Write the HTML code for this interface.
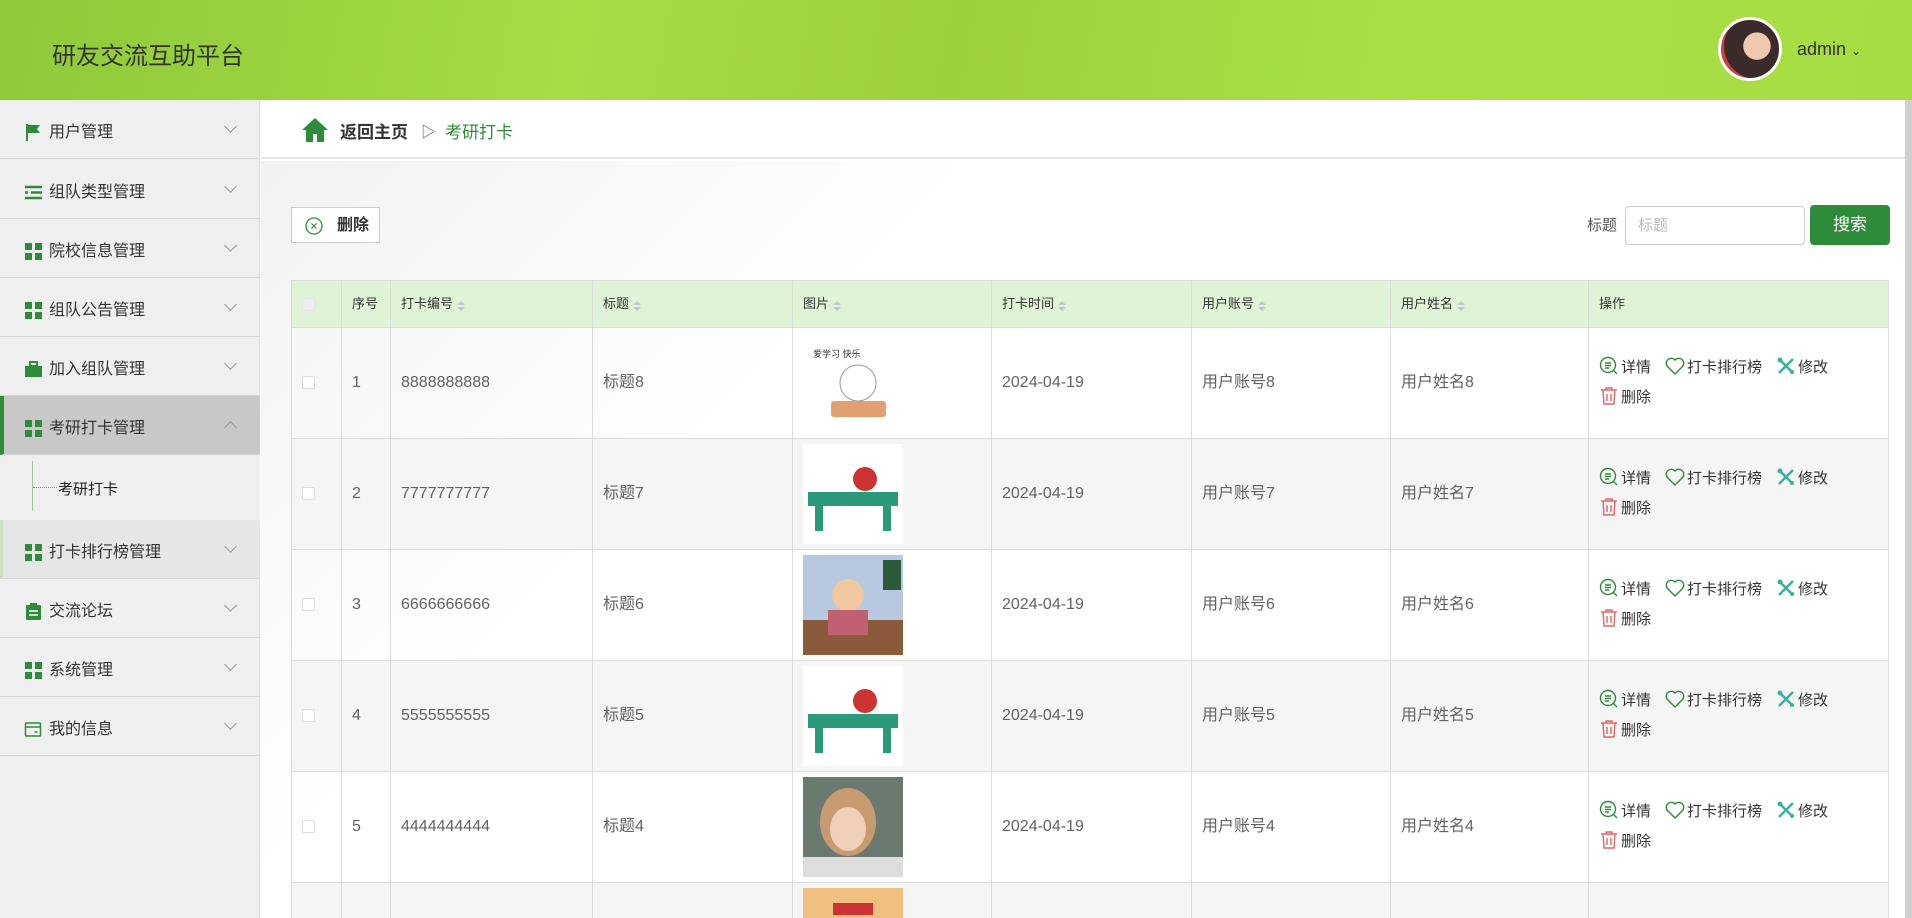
<!DOCTYPE html>
<html><head><meta charset="utf-8"><style>
*{box-sizing:border-box;margin:0;padding:0}
html,body{width:1912px;height:918px;overflow:hidden}
body{font-family:"Liberation Sans","Noto Sans CJK SC",sans-serif;background:#fff;position:relative;color:#606266}
.hdr{position:absolute;left:0;top:0;width:1912px;height:100px;background:linear-gradient(100deg,#8fc93a 0%,#a6dc44 30%,#9cd13e 50%,#a9e145 75%,#a4dc42 100%)}
.hdr .t{position:absolute;left:52px;top:36px;font-size:24px;color:#333}
.av{position:absolute;left:1718px;top:17px;width:64px;height:64px;border-radius:50%;background:radial-gradient(circle at 62% 45%,#f0c8b0 0 28%,#3a2a2a 29% 68%,#c94040 69%);border:3px solid #fff}
.adm{position:absolute;left:1797px;top:39px;font-size:18px;color:#333}
.side{position:absolute;left:0;top:100px;width:260px;height:818px;background:#efefef;border-right:1px solid #ddd}
.mi{position:absolute;left:0;width:260px;height:59px;border-bottom:1px solid #d6d6d6;font-size:16px;color:#333}
.mi .ic{position:absolute;left:25px;top:24px;width:17px;height:17px}
.mi span{position:absolute;left:49px;top:23px;line-height:20px}
.mi .ar{position:absolute;left:226px;top:22px;width:9px;height:9px;border-right:1px solid #999;border-bottom:1px solid #999;transform:rotate(45deg)}
.grid{background:linear-gradient(#2e8b3a,#2e8b3a) 0 0/7px 7px no-repeat,linear-gradient(#2e8b3a,#2e8b3a) 10px 0/7px 7px no-repeat,linear-gradient(#2e8b3a,#2e8b3a) 0 10px/7px 7px no-repeat,linear-gradient(#2e8b3a,#2e8b3a) 10px 10px/7px 7px no-repeat}
.bc{position:absolute;left:261px;top:100px;width:1644px;height:59px;background:#fff;border-bottom:2px solid #e8e8e8}
.main{position:absolute;left:261px;top:161px;width:1644px;height:757px;background:linear-gradient(135deg,#f2f2f2 0%,#fff 30%,#fff 100%)}
.scroll{position:absolute;left:1905px;top:100px;width:7px;height:818px;background:#d0d0d0}
.btn{position:absolute;left:291px;top:207px;width:89px;height:36px;border:1px solid #ccc;background:#fff;font-size:16px;font-weight:bold;color:#333}
.tw{position:absolute;left:291px;top:280px;width:1599px;height:638px;overflow:hidden}
table{width:1598px;border-collapse:collapse;font-size:16px;line-height:20px}
td,th{border:1px solid #dcdcdc;text-align:left;padding-left:10px;vertical-align:middle}
th{height:47px;background:#dff3d6;font-size:13px;font-weight:normal;color:#333}
td{height:111px}
tr.g td{background:#f5f5f5}
.s{display:inline-block;vertical-align:middle;margin-left:4px;width:0;height:0;position:relative;top:-4px;border:4px solid transparent;border-bottom-color:#c0c4cc}
.s:after{content:"";position:absolute;left:-4px;top:6px;border:4px solid transparent;border-top-color:#c0c4cc}
.cb{display:inline-block;width:13px;height:13px;border:1px solid #ddd;background:#fff;border-radius:2px;vertical-align:middle}
.img{width:100px;height:100px;display:block}
.op{font-size:15px;color:#333;line-height:30px}
.op i{font-style:normal;margin-right:14px;white-space:nowrap}
.op svg{vertical-align:-4px;margin-right:2px}
</style></head><body>
<div class="hdr"><div class="t">研友交流互助平台</div><div class="av"></div><div class="adm">admin <span style="font-size:12px">⌄</span></div></div>
<div class="side">
<div class="mi" style="top:0"><svg class="ic" viewBox="0 0 17 17"><path d="M2 0v17" stroke="#2e8b3a" stroke-width="2"/><path d="M3 1h12l-3 4 3 4H3z" fill="#2e8b3a"/></svg><span>用户管理</span><i class="ar"></i></div>
<div class="mi" style="top:60px"><svg class="ic" viewBox="0 0 17 17"><path d="M0 3h17M6 8.5h11M0 14h17M0 8.5h3" stroke="#2e8b3a" stroke-width="2.5"/></svg><span>组队类型管理</span><i class="ar"></i></div>
<div class="mi" style="top:119px"><i class="ic grid"></i><span>院校信息管理</span><i class="ar"></i></div>
<div class="mi" style="top:178px"><i class="ic grid"></i><span>组队公告管理</span><i class="ar"></i></div>
<div class="mi" style="top:237px"><svg class="ic" viewBox="0 0 17 17"><rect x="0" y="5" width="17" height="11" fill="#2e8b3a"/><rect x="5" y="1" width="7" height="4" fill="none" stroke="#2e8b3a" stroke-width="2"/></svg><span>加入组队管理</span><i class="ar"></i></div>
<div class="mi" style="top:296px;background:#c8c8c8;border-left:4px solid #2e8b3a"><i class="ic grid" style="left:21px"></i><span style="left:45px">考研打卡管理</span><i class="ar" style="transform:rotate(225deg);top:27px;left:222px"></i></div>
<div style="position:absolute;top:355px;left:0;width:260px;height:65px;background:#efefef"><div style="position:absolute;left:32px;top:6px;width:1px;height:50px;background:#9c9"></div><div style="position:absolute;left:33px;top:32px;width:24px;border-top:1px dotted #888"></div><span style="position:absolute;left:58px;top:23px;font-size:15px;color:#222">考研打卡</span></div>
<div class="mi" style="top:420px;background:#e6e6e6;border-left:3px solid #cde0c5"><i class="ic grid" style="left:22px"></i><span style="left:46px">打卡排行榜管理</span><i class="ar" style="left:223px"></i></div>
<div class="mi" style="top:479px"><svg class="ic" viewBox="0 0 17 17"><rect x="1" y="2" width="15" height="15" rx="1" fill="#2e8b3a"/><rect x="5" y="0" width="7" height="4" fill="#2e8b3a"/><path d="M4 8h9M4 12h9" stroke="#fff" stroke-width="1.5"/></svg><span>交流论坛</span><i class="ar"></i></div>
<div class="mi" style="top:538px"><i class="ic grid"></i><span>系统管理</span><i class="ar"></i></div>
<div class="mi" style="top:597px"><svg class="ic" viewBox="0 0 17 17" style="left:23px;width:20px"><rect x="1" y="2" width="15" height="13" rx="1" fill="none" stroke="#2e8b3a" stroke-width="1.5"/><path d="M1 6h15M10 11h3" stroke="#2e8b3a" stroke-width="1.5"/></svg><span>我的信息</span><i class="ar"></i></div>
</div>
<div class="main"></div>
<div class="bc"><svg style="position:absolute;left:40px;top:17px" width="28" height="26" viewBox="0 0 28 26"><path d="M14 1L1 13h4v12h7v-8h4v8h7V13h4z" fill="#2e8b3a"/></svg><span style="position:absolute;left:79px;top:23px;font-size:17px;line-height:20px;font-weight:bold;color:#333">返回主页</span><span style="position:absolute;left:160px;top:23px;font-size:15px;line-height:20px;color:#555">▷</span><span style="position:absolute;left:184px;top:23px;font-size:17px;line-height:20px;color:#2e8b3a">考研打卡</span></div>
<div class="scroll"></div>
<div class="btn"><svg style="position:absolute;left:13px;top:9px" width="18" height="18" viewBox="0 0 18 18"><circle cx="9" cy="9" r="8" fill="none" stroke="#2e8b3a" stroke-width="1.3"/><path d="M6.5 6.5l5 5M11.5 6.5l-5 5" stroke="#2e8b3a" stroke-width="1.2"/></svg><span style="position:absolute;left:45px;top:8px;line-height:20px">删除</span></div>
<span style="position:absolute;left:1587px;top:216px;font-size:15px;line-height:20px;color:#555">标题</span>
<div style="position:absolute;left:1625px;top:206px;width:180px;height:39px;border:1px solid #ccc;border-radius:4px;background:#fff"><span style="position:absolute;left:12px;top:9px;font-size:15px;line-height:20px;color:#bbb">标题</span></div>
<div style="position:absolute;left:1810px;top:205px;width:80px;height:40px;border-radius:4px;background:#2e8b3a;color:#fff;font-size:17px;text-align:center;line-height:40px">搜索</div>
<svg width="0" height="0" style="position:absolute;left:0;top:0"><defs>
<symbol id="d" viewBox="0 0 20 20"><circle cx="9" cy="9" r="7.5" fill="none" stroke="#2e8b3a" stroke-width="1.4"/><path d="M6 7h6M6 9.5h6M6 12h4M14 14l4 4" stroke="#2e8b3a" stroke-width="1.4"/></symbol>
<symbol id="h" viewBox="0 0 20 20"><path d="M10 18L2.5 10.5A4.5 4.5 0 0 1 10 4a4.5 4.5 0 0 1 7.5 6.5z" fill="none" stroke="#2e8b3a" stroke-width="1.4"/></symbol>
<symbol id="w" viewBox="0 0 20 20"><path d="M3 3l14 14M17 3L3 17" stroke="#3ab09e" stroke-width="2.5"/><circle cx="4" cy="4" r="2.5" fill="#3ab09e"/><circle cx="16" cy="16" r="2" fill="#3ab09e"/></symbol>
<symbol id="t" viewBox="0 0 20 20"><path d="M2 4h16M7 4V2h6v2M4 4l1 14h10l1-14M8 8v7M12 8v7" fill="none" stroke="#d66" stroke-width="1.4"/></symbol>
</defs></svg>
<div class="tw"><table>
<tr><th style="width:50px"><span class="cb" style="background:#eee;border-color:#e5e5e5"></span></th><th style="width:49px">序号</th><th style="width:202px">打卡编号<i class="s"></i></th><th style="width:200px">标题<i class="s"></i></th><th style="width:199px">图片<i class="s"></i></th><th style="width:200px">打卡时间<i class="s"></i></th><th style="width:199px">用户账号<i class="s"></i></th><th style="width:198px">用户姓名<i class="s"></i></th><th>操作</th></tr>
<tr><td><span class="cb"></span></td><td>1</td><td>8888888888</td><td>标题8</td><td><svg class="img" viewBox="0 0 100 100"><rect width="100" height="100" fill="#fff"/><text x="10" y="24" font-size="9" fill="#333">爱学习 快乐</text><circle cx="55" cy="50" r="18" fill="#fff" stroke="#999"/><rect x="28" y="68" width="55" height="16" rx="3" fill="#e0a070"/></svg></td><td>2024-04-19</td><td>用户账号8</td><td>用户姓名8</td><td class="op"><i><svg width="20" height="20"><use href="#d"/></svg>详情</i><i><svg width="20" height="20"><use href="#h"/></svg>打卡排行榜</i><i><svg width="20" height="20"><use href="#w"/></svg>修改</i><br><i><svg width="20" height="20"><use href="#t"/></svg>删除</i></td></tr>
<tr class="g"><td><span class="cb"></span></td><td>2</td><td>7777777777</td><td>标题7</td><td><svg class="img" viewBox="0 0 100 100"><rect width="100" height="100" fill="#fff"/><circle cx="62" cy="35" r="12" fill="#c33"/><rect x="5" y="48" width="90" height="14" fill="#2a9a7a"/><rect x="12" y="62" width="8" height="25" fill="#2a9a7a"/><rect x="80" y="62" width="8" height="25" fill="#2a9a7a"/></svg></td><td>2024-04-19</td><td>用户账号7</td><td>用户姓名7</td><td class="op"><i><svg width="20" height="20"><use href="#d"/></svg>详情</i><i><svg width="20" height="20"><use href="#h"/></svg>打卡排行榜</i><i><svg width="20" height="20"><use href="#w"/></svg>修改</i><br><i><svg width="20" height="20"><use href="#t"/></svg>删除</i></td></tr>
<tr><td><span class="cb"></span></td><td>3</td><td>6666666666</td><td>标题6</td><td><svg class="img" viewBox="0 0 100 100"><rect width="100" height="100" fill="#b8c8e0"/><rect x="0" y="65" width="100" height="35" fill="#8a5a3a"/><circle cx="45" cy="40" r="16" fill="#f0c8a0"/><rect x="25" y="55" width="40" height="25" fill="#c06070"/><rect x="80" y="5" width="18" height="30" fill="#2a5a3a"/></svg></td><td>2024-04-19</td><td>用户账号6</td><td>用户姓名6</td><td class="op"><i><svg width="20" height="20"><use href="#d"/></svg>详情</i><i><svg width="20" height="20"><use href="#h"/></svg>打卡排行榜</i><i><svg width="20" height="20"><use href="#w"/></svg>修改</i><br><i><svg width="20" height="20"><use href="#t"/></svg>删除</i></td></tr>
<tr class="g"><td><span class="cb"></span></td><td>4</td><td>5555555555</td><td>标题5</td><td><svg class="img" viewBox="0 0 100 100"><rect width="100" height="100" fill="#fff"/><circle cx="62" cy="35" r="12" fill="#c33"/><rect x="5" y="48" width="90" height="14" fill="#2a9a7a"/><rect x="12" y="62" width="8" height="25" fill="#2a9a7a"/><rect x="80" y="62" width="8" height="25" fill="#2a9a7a"/></svg></td><td>2024-04-19</td><td>用户账号5</td><td>用户姓名5</td><td class="op"><i><svg width="20" height="20"><use href="#d"/></svg>详情</i><i><svg width="20" height="20"><use href="#h"/></svg>打卡排行榜</i><i><svg width="20" height="20"><use href="#w"/></svg>修改</i><br><i><svg width="20" height="20"><use href="#t"/></svg>删除</i></td></tr>
<tr><td><span class="cb"></span></td><td>5</td><td>4444444444</td><td>标题4</td><td><svg class="img" viewBox="0 0 100 100"><rect width="100" height="100" fill="#6a7a70"/><ellipse cx="45" cy="45" rx="28" ry="34" fill="#c89a70"/><ellipse cx="45" cy="52" rx="18" ry="22" fill="#f0d0b8"/><rect x="0" y="80" width="100" height="20" fill="#ddd"/></svg></td><td>2024-04-19</td><td>用户账号4</td><td>用户姓名4</td><td class="op"><i><svg width="20" height="20"><use href="#d"/></svg>详情</i><i><svg width="20" height="20"><use href="#h"/></svg>打卡排行榜</i><i><svg width="20" height="20"><use href="#w"/></svg>修改</i><br><i><svg width="20" height="20"><use href="#t"/></svg>删除</i></td></tr>
<tr class="g"><td></td><td></td><td></td><td></td><td><svg class="img" viewBox="0 0 100 100"><rect width="100" height="100" fill="#f0c080"/><rect x="30" y="15" width="40" height="12" fill="#c33"/></svg></td><td></td><td></td><td></td><td></td></tr>
</table></div>
</body></html>
